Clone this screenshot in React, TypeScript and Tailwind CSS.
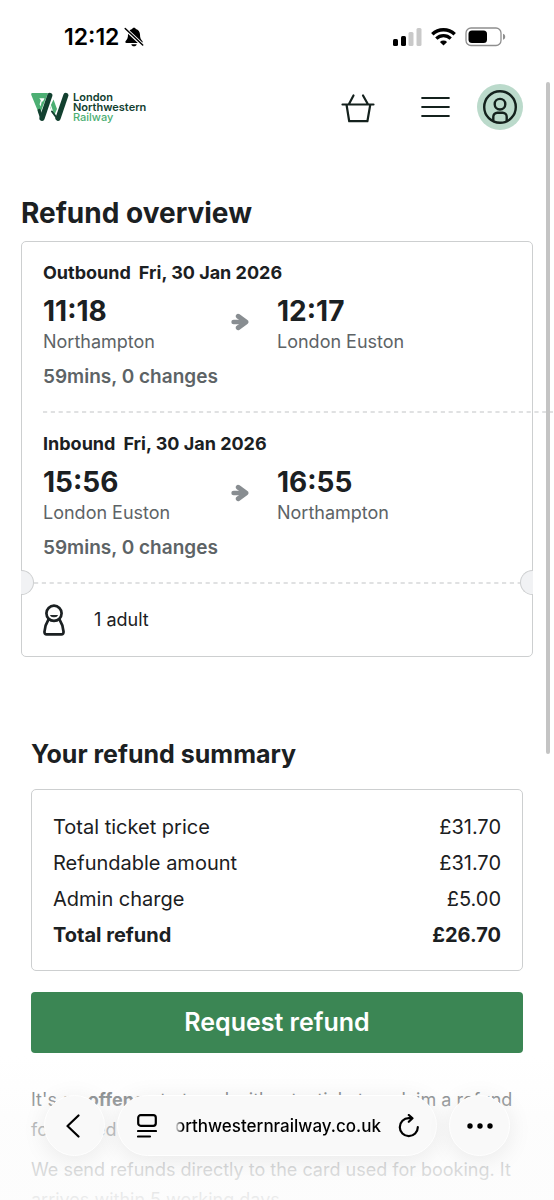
import { clsx } from 'clsx'

interface Journey {
  direction: string
  date: string
  departTime: string
  departStation: string
  arriveTime: string
  arriveStation: string
  details: string
}

const journeys: Journey[] = [
  {
    direction: 'Outbound',
    date: 'Fri, 30 Jan 2026',
    departTime: '11:18',
    departStation: 'Northampton',
    arriveTime: '12:17',
    arriveStation: 'London Euston',
    details: '59mins, 0 changes',
  },
  {
    direction: 'Inbound',
    date: 'Fri, 30 Jan 2026',
    departTime: '15:56',
    departStation: 'London Euston',
    arriveTime: '16:55',
    arriveStation: 'Northampton',
    details: '59mins, 0 changes',
  },
]

const summary = [
  { label: 'Total ticket price', value: '£31.70' },
  { label: 'Refundable amount', value: '£31.70' },
  { label: 'Admin charge', value: '£5.00' },
  { label: 'Total refund', value: '£26.70', total: true },
]

function StatusBar() {
  return (
    <div className="flex h-[74px] shrink-0 items-center justify-between pl-16 pr-12 text-black">
      <div className="flex items-center gap-[5px]">
        <span className="text-[23px] font-semibold leading-7">12:12</span>
        <svg width="20" height="20" viewBox="0 0 20 20" aria-hidden="true">
          <path
            d="M10 .8c-.9 0-1.6.5-1.800 1.300C5.600 2.900 4 5 4 7.600c0 3.600-.8 4.800-2.300 6.300-.8.8-.4 2 .8 2h15c1.200 0 1.600-1.200.8-2C16.800 12.400 16 11.200 16 7.600c0-2.600-1.600-4.700-4.200-5.500C11.600 1.300 10.900.8 10 .8zM7.300 17.200h5.400c-.3 1.300-1.300 2.100-2.700 2.100s-2.400-.8-2.700-2.100z"
            fill="currentColor"
          />
          <path d="M1 1.500 18.500 18" stroke="#fff" strokeWidth="3.600" />
          <path d="M1.200 1.500 18.700 18" stroke="currentColor" strokeWidth="1.500" strokeLinecap="round" />
        </svg>
      </div>
      <div className="flex items-center gap-[9px]">
        <svg width="29" height="18" viewBox="0 0 29 18" aria-hidden="true">
          <rect x="0" y="11" width="5" height="7" rx="1.500" />
          <rect x="8" y="8" width="5" height="10" rx="1.500" />
          <rect x="15.500" y="4" width="5" height="14" rx="1.500" fill="#c9c9c9" />
          <rect x="23.500" y="0" width="5" height="18" rx="1.500" fill="#c9c9c9" />
        </svg>
        <svg width="25" height="18" viewBox="0 0 25 18" fill="none" stroke="currentColor" aria-hidden="true">
          <path d="M1.300 6.300a16 16 0 0 1 22.400 0" strokeWidth="3.400" />
          <path d="M5.300 10.700a10.200 10.200 0 0 1 14.400 0" strokeWidth="3.200" />
          <path d="M12.500 17.500 8.900 13.900a5.200 5.200 0 0 1 7.200 0z" fill="currentColor" stroke="none" />
        </svg>
        <svg width="41" height="20" viewBox="0 0 41 20" aria-hidden="true">
          <rect x="1" y="1" width="35" height="17.500" rx="5" fill="none" stroke="#8e8e8e" strokeWidth="1.300" />
          <rect x="3.500" y="3.500" width="18.500" height="12.500" rx="3.500" />
          <path d="M38 6.800c1.400.4 2.200 1.500 2.200 3s-.8 2.600-2.200 3z" fill="#8e8e8e" />
        </svg>
      </div>
    </div>
  )
}

function Logo() {
  return (
    <a href="#home" className="flex items-center gap-1 text-[11px] leading-[10px]">
      <svg width="38" height="30" viewBox="0 0 38 30" aria-hidden="true">
        <path d="M1.500 1h15.500L8.500 23 .4 3.200C-.1 2 .4 1 1.500 1z" fill="#4caf73" />
        <path d="M8.300 6.200h5.200L12 9.500H10.800L9.600 14.500 8.600 12.200 9.800 8.200z" fill="#fff" />
        <path d="M22.500 7.500 26 17l-3 7-4-9z" fill="#4caf73" />
        <path d="m18.300 10 3.200 9.500 2.300 6.500" stroke="#fff" strokeWidth="1.200" fill="none" />
        <path d="M18.800 3.500 11 26.300" stroke="#12402f" strokeWidth="5.200" strokeLinecap="round" />
        <path d="m8.200 18.500 2.500 7.700" stroke="#12402f" strokeWidth="3.200" strokeLinecap="round" />
        <path d="m21 19.500 4.800 6.500" stroke="#12402f" strokeWidth="2" strokeLinecap="round" />
        <path d="M34.800 3.500 27 26.300" stroke="#12402f" strokeWidth="5.200" strokeLinecap="round" />
      </svg>
      <span className="flex flex-col font-semibold text-[#12402f]">
        <span>London</span>
        <span>Northwestern</span>
        <span className="font-medium text-[#4caf73]">Railway</span>
      </span>
    </a>
  )
}

function Header() {
  return (
    <header className="flex h-[66px] items-center justify-between px-[31px]">
      <Logo />
      <nav className="flex items-center text-[#14211d]">
        <button type="button" aria-label="Basket" className="mr-[46px]">
          <svg width="34" height="32" viewBox="0 0 34 32" fill="none" stroke="currentColor" strokeWidth="2.200" strokeLinecap="round" strokeLinejoin="round">
            <path d="M1.500 13.500h31M5.500 13.500l2.700 16.700h18.200l2.900-16.700M12.500 4.500 8 13M22 4.500l4.800 8.500" />
          </svg>
        </button>
        <button type="button" aria-label="Menu" className="mr-[27px]">
          <svg width="29" height="22" viewBox="0 0 29 22" stroke="currentColor" strokeWidth="2.200" strokeLinecap="round">
            <path d="M1.200 2h26.600M1.200 11h26.600M1.200 20h26.600" />
          </svg>
        </button>
        <button type="button" aria-label="Account" className="flex size-[46px] items-center justify-center rounded-full bg-[#bbdacb]">
          <svg width="34" height="34" viewBox="0 0 34 34" fill="none" stroke="currentColor" strokeWidth="2.400">
            <circle cx="17" cy="17" r="15.800" />
            <circle cx="17" cy="14.200" r="5.300" />
            <path d="M10.300 31v-4.200a4 4 0 0 1 4-4h5.400a4 4 0 0 1 4 4V31" />
          </svg>
        </button>
      </nav>
    </header>
  )
}

function JourneyLeg({ journey }: { journey: Journey }) {
  return (
    <section className="pt-[17px] text-lg leading-7">
      <h2 className="flex gap-2 font-bold">
        <span>{journey.direction}</span>
        <span>{journey.date}</span>
      </h2>
      <div className="mt-2 grid grid-cols-2">
        <div className="flex items-center justify-between pr-7">
          <div>
            <p className="text-[28px] font-bold leading-[33px]">{journey.departTime}</p>
            <p className="text-[#5d6366]">{journey.departStation}</p>
          </div>
          <svg className="mb-2" width="18" height="18" viewBox="0 0 18 18" fill="none" stroke="#888d91" strokeLinecap="round" strokeLinejoin="round" aria-hidden="true">
            <path d="M2.600 9H11" strokeWidth="4.600" />
            <path d="M7.200 3.200 15 9l-7.800 5.800" strokeWidth="4.800" />
            <path d="M9.500 5.500 15 9l-5.500 3.500z" fill="#888d91" strokeWidth="2.500" />
          </svg>
        </div>
        <div>
          <p className="text-[28px] font-bold leading-[33px]">{journey.arriveTime}</p>
          <p className="text-[#5d6366]">{journey.arriveStation}</p>
        </div>
      </div>
      <p className="mt-[7px] pb-5 text-[19px] font-semibold text-[#5d6366]">{journey.details}</p>
    </section>
  )
}

function DashedLine() {
  return (
    <svg className="block h-0.5 w-full" aria-hidden="true">
      <line x1="0" y1="1" x2="100%" y2="1" stroke="#d6d8d9" strokeWidth="1.600" strokeDasharray="4.200 3.600" />
    </svg>
  )
}

function TicketCard() {
  return (
    <div className="relative rounded-[5px] border border-[#cdcfd0] px-[21px]">
      <JourneyLeg journey={journeys[0]} />
      {/* divider runs past the card to the edge of the page */}
      <div className="-mr-[42px]">
        <DashedLine />
      </div>
      <JourneyLeg journey={journeys[1]} />
      <div className="relative -mx-[21px] px-3">
        <DashedLine />
        <span className="absolute -left-px -top-3 h-[25px] w-[13px] rounded-r-full border border-l-0 border-[#cdcfd0] bg-[#f1f2f4]" />
        <span className="absolute -right-px -top-3 h-[25px] w-[13px] rounded-l-full border border-r-0 border-[#cdcfd0] bg-[#f1f2f4]" />
      </div>
      <div className="flex h-[72px] items-center gap-[29px] text-lg">
        <svg width="22" height="32" viewBox="0 0 22 32" fill="none" stroke="currentColor" strokeWidth="2.700" strokeLinejoin="round" aria-hidden="true">
          <circle cx="11" cy="9.300" r="7.600" />
          <path d="M5.600 15.200C3.500 18.500 1.900 23 1.500 27.500c-.2 1.900.6 2.900 2.200 2.900h14.600c1.600 0 2.400-1 2.200-2.900-.4-4.500-2-9-4.100-12.300" />
          <path d="M7.500 11.600c1.800 1.600 5.200 1.600 7 0z" fill="currentColor" strokeWidth="1" />
        </svg>
        <span>1 adult</span>
      </div>
    </div>
  )
}

function RefundSummary() {
  return (
    <section className="mt-20 px-[10px]">
      <h2 className="text-[25px] font-bold leading-[34px]">Your refund summary</h2>
      <div className="mt-[18px] rounded-[5px] border border-[#cdcfd0] px-[21px] pb-[17px] pt-[19px]">
        <table className="w-full text-xl leading-9">
          <tbody>
            {summary.map((row) => (
              <tr key={row.label}>
                <th scope="row" className={clsx('p-0 text-left', row.total ? 'font-bold' : 'font-normal')}>
                  {row.label}
                </th>
                <td className={clsx('p-0 text-right', row.total && 'font-bold')}>{row.value}</td>
              </tr>
            ))}
          </tbody>
        </table>
      </div>
      <button type="button" className="mt-[21px] h-[61px] w-full rounded bg-[#3b8654] text-[25px] font-semibold text-white">
        Request refund
      </button>
      <div className="mt-8 space-y-[10px] text-lg leading-[30px] text-[#5d6366]">
        <p>
          It&apos;s an <strong>offence</strong> to travel without a ticket or claim a refund for a used ticket.
        </p>
        <p>We send refunds directly to the card used for booking. It arrives within 5 working days.</p>
      </div>
    </section>
  )
}

const glass = 'border border-white bg-[#f9f9f9] shadow-[0_4px_24px_rgba(0,0,0,0.08)]'

function BrowserBar() {
  return (
    <div className="absolute inset-x-0 bottom-0 flex h-36 items-end gap-3 bg-linear-to-b from-white/0 via-[#fbfbfb]/60 via-50% to-[#fcfcfc]/90 px-11 pb-11 text-black">
      <button type="button" aria-label="Back" className={clsx('flex size-[61px] shrink-0 items-center justify-center rounded-full pr-1', glass)}>
        <svg width="14" height="24" viewBox="0 0 14 24" fill="none" stroke="currentColor" strokeWidth="2.200" strokeLinecap="round" strokeLinejoin="round">
          <path d="M12.500 1.500 1.500 12l11 10.500" />
        </svg>
      </button>
      <div className={clsx('flex h-[61px] min-w-0 flex-1 items-center rounded-full pl-[19px] pr-4', glass)}>
        <button type="button" aria-label="Page menu" className="shrink-0">
          <svg width="20" height="24" viewBox="0 0 20 24" fill="none" stroke="currentColor" strokeWidth="2.200" strokeLinecap="round">
            <rect x="1.200" y="1.200" width="17.600" height="10.600" rx="2.500" />
            <path d="M1 17h18M1 22.500h12" />
          </svg>
        </button>
        <div className="ml-[18px] mr-[17px] flex min-w-0 flex-1 justify-end overflow-hidden whitespace-nowrap text-[17px] font-medium leading-6 [mask-image:linear-gradient(to_right,transparent,black_8px)]">
          <span>northwesternrailway.co.uk</span>
        </div>
        <button type="button" aria-label="Reload" className="shrink-0">
          <svg width="22" height="24" viewBox="0 0 22 24" fill="none" stroke="currentColor" strokeWidth="2.200" strokeLinecap="round" strokeLinejoin="round">
            <path d="M19.800 13.200a9 9 0 1 1-9-9h3.400M10.800 1l3.700 3.300-3.700 3.500" />
          </svg>
        </button>
      </div>
      <button type="button" aria-label="More" className={clsx('flex size-[61px] shrink-0 items-center justify-center rounded-full', glass)}>
        <svg width="26" height="6" viewBox="0 0 26 6" fill="currentColor">
          <circle cx="3" cy="3" r="2.700" />
          <circle cx="13" cy="3" r="2.700" />
          <circle cx="23" cy="3" r="2.700" />
        </svg>
      </button>
    </div>
  )
}

export default function App() {
  return (
    <div className="relative flex h-screen flex-col overflow-hidden bg-white font-[Inter,sans-serif] text-[#1b2022]">
      <StatusBar />
      <div className="min-h-0 flex-1 overflow-x-hidden overflow-y-auto [scrollbar-width:none]">
        <Header />
        <main className="px-[21px] pt-14">
          <h1 className="mb-[11px] text-[28px] font-bold leading-[34px]">Refund overview</h1>
          <TicketCard />
          <RefundSummary />
        </main>
      </div>
      <div className="absolute right-1 top-[82px] h-[56%] w-1 rounded-full bg-[#c4c4c4]" />
      <BrowserBar />
    </div>
  )
}
